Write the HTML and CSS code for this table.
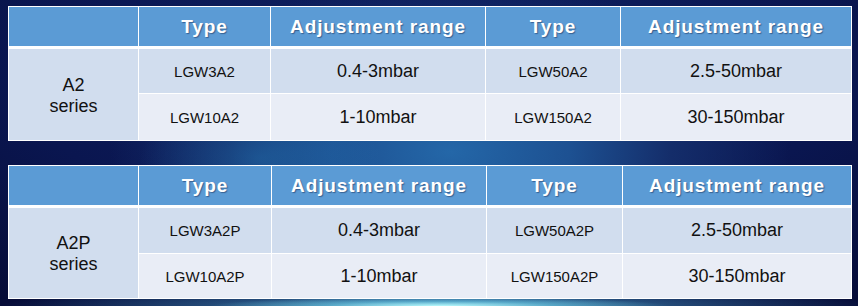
FILE: index.html
```html
<!DOCTYPE html>
<html lang="en">
<head>
<meta charset="utf-8">
<title>A2 / A2P series</title>
<link rel="stylesheet" href="styles.css">
</head>
<body>
<div class="page">
  <table class="spec spec-a2">
    <colgroup>
      <col class="c-series"><col class="c-type"><col class="c-range"><col class="c-type2"><col class="c-range2">
    </colgroup>
    <thead>
      <tr class="head">
        <th></th>
        <th>Type</th>
        <th>Adjustment range</th>
        <th>Type</th>
        <th>Adjustment range</th>
      </tr>
    </thead>
    <tbody>
      <tr class="row1">
        <td class="series" rowspan="2">A2<br>series</td>
        <td class="type">LGW3A2</td>
        <td class="range">0.4-3mbar</td>
        <td class="type">LGW50A2</td>
        <td class="range">2.5-50mbar</td>
      </tr>
      <tr class="row2">
        <td class="type">LGW10A2</td>
        <td class="range">1-10mbar</td>
        <td class="type">LGW150A2</td>
        <td class="range">30-150mbar</td>
      </tr>
    </tbody>
  </table>

  <table class="spec spec-a2p">
    <colgroup>
      <col class="c-series"><col class="c-type"><col class="c-range"><col class="c-type2"><col class="c-range2">
    </colgroup>
    <thead>
      <tr class="head">
        <th></th>
        <th>Type</th>
        <th>Adjustment range</th>
        <th>Type</th>
        <th>Adjustment range</th>
      </tr>
    </thead>
    <tbody>
      <tr class="row1">
        <td class="series" rowspan="2">A2P<br>series</td>
        <td class="type">LGW3A2P</td>
        <td class="range">0.4-3mbar</td>
        <td class="type">LGW50A2P</td>
        <td class="range">2.5-50mbar</td>
      </tr>
      <tr class="row2">
        <td class="type">LGW10A2P</td>
        <td class="range">1-10mbar</td>
        <td class="type">LGW150A2P</td>
        <td class="range">30-150mbar</td>
      </tr>
    </tbody>
  </table>
</div>
</body>
</html>
```
FILE: styles.css
```css
html, body {
  margin: 0;
  padding: 0;
}

body {
  width: 858px;
  height: 306px;
  overflow: hidden;
  font-family: "Liberation Sans", Arial, sans-serif;
  background:
    radial-gradient(ellipse 230px 9px at 440px 306px, rgba(190, 255, 255, 0.95), rgba(120, 220, 240, 0.5) 50%, rgba(80, 170, 220, 0) 100%),
    radial-gradient(ellipse 440px 20px at 440px 306px, rgba(90, 190, 230, 0.7), rgba(60, 140, 200, 0) 100%),
    radial-gradient(ellipse 120px 60px at 260px 158px, rgba(40, 140, 200, 0.35), rgba(40, 140, 200, 0) 100%),
    radial-gradient(ellipse 340px 170px at 450px 152px, #2467a8 0%, #1d5192 35%, #142d6a 65%, rgba(12, 22, 80, 0) 100%),
    radial-gradient(ellipse 700px 300px at 430px 60px, #0f2263 0%, #0a1650 60%, #060c38 100%);
  background-color: #060c38;
}

.page {
  display: flex;
  flex-direction: column;
  gap: 24px;
  padding: 6px 0 0 8px;
}

.spec {
  width: 843px;
  border-collapse: collapse;
  table-layout: fixed;
  border: 1px solid #ffffff;
}

.c-series { width: 130px; }
.c-type { width: 132px; }
.c-range { width: 215px; }
.c-type2 { width: 135px; }
.c-range2 { width: 231px; }

.spec-a2p .c-type { width: 133px; }
.spec-a2p .c-range { width: 215px; }
.spec-a2p .c-type2 { width: 136px; }
.spec-a2p .c-range2 { width: 229px; }

.spec th,
.spec td {
  border: 1px solid #ffffff;
  padding: 0;
  text-align: center;
  vertical-align: middle;
}

.head th {
  background: #5b9bd5;
  color: #ffffff;
  font-weight: bold;
  font-size: 19px;
  letter-spacing: 0.9px;
  text-shadow: 1px 1px 1px rgba(20, 40, 80, 0.5);
  height: 39px;
  border-bottom: 3px solid #ffffff;
}

.spec td {
  color: #111111;
}

.row1 td {
  background: #d1ddee;
  height: 44px;
}

.row2 td {
  background: #e9edf6;
  height: 46px;
}

.spec-a2p .row1 td { height: 45px; }
.spec-a2p .row2 td { height: 44px; }

.spec td.series {
  background: #d1ddee;
  font-size: 18px;
  line-height: 21px;
  padding-top: 2px;
}

.type {
  font-size: 15px;
  padding-bottom: 3px;
}

.range {
  font-size: 18px;
  padding-bottom: 2px;
}
```
